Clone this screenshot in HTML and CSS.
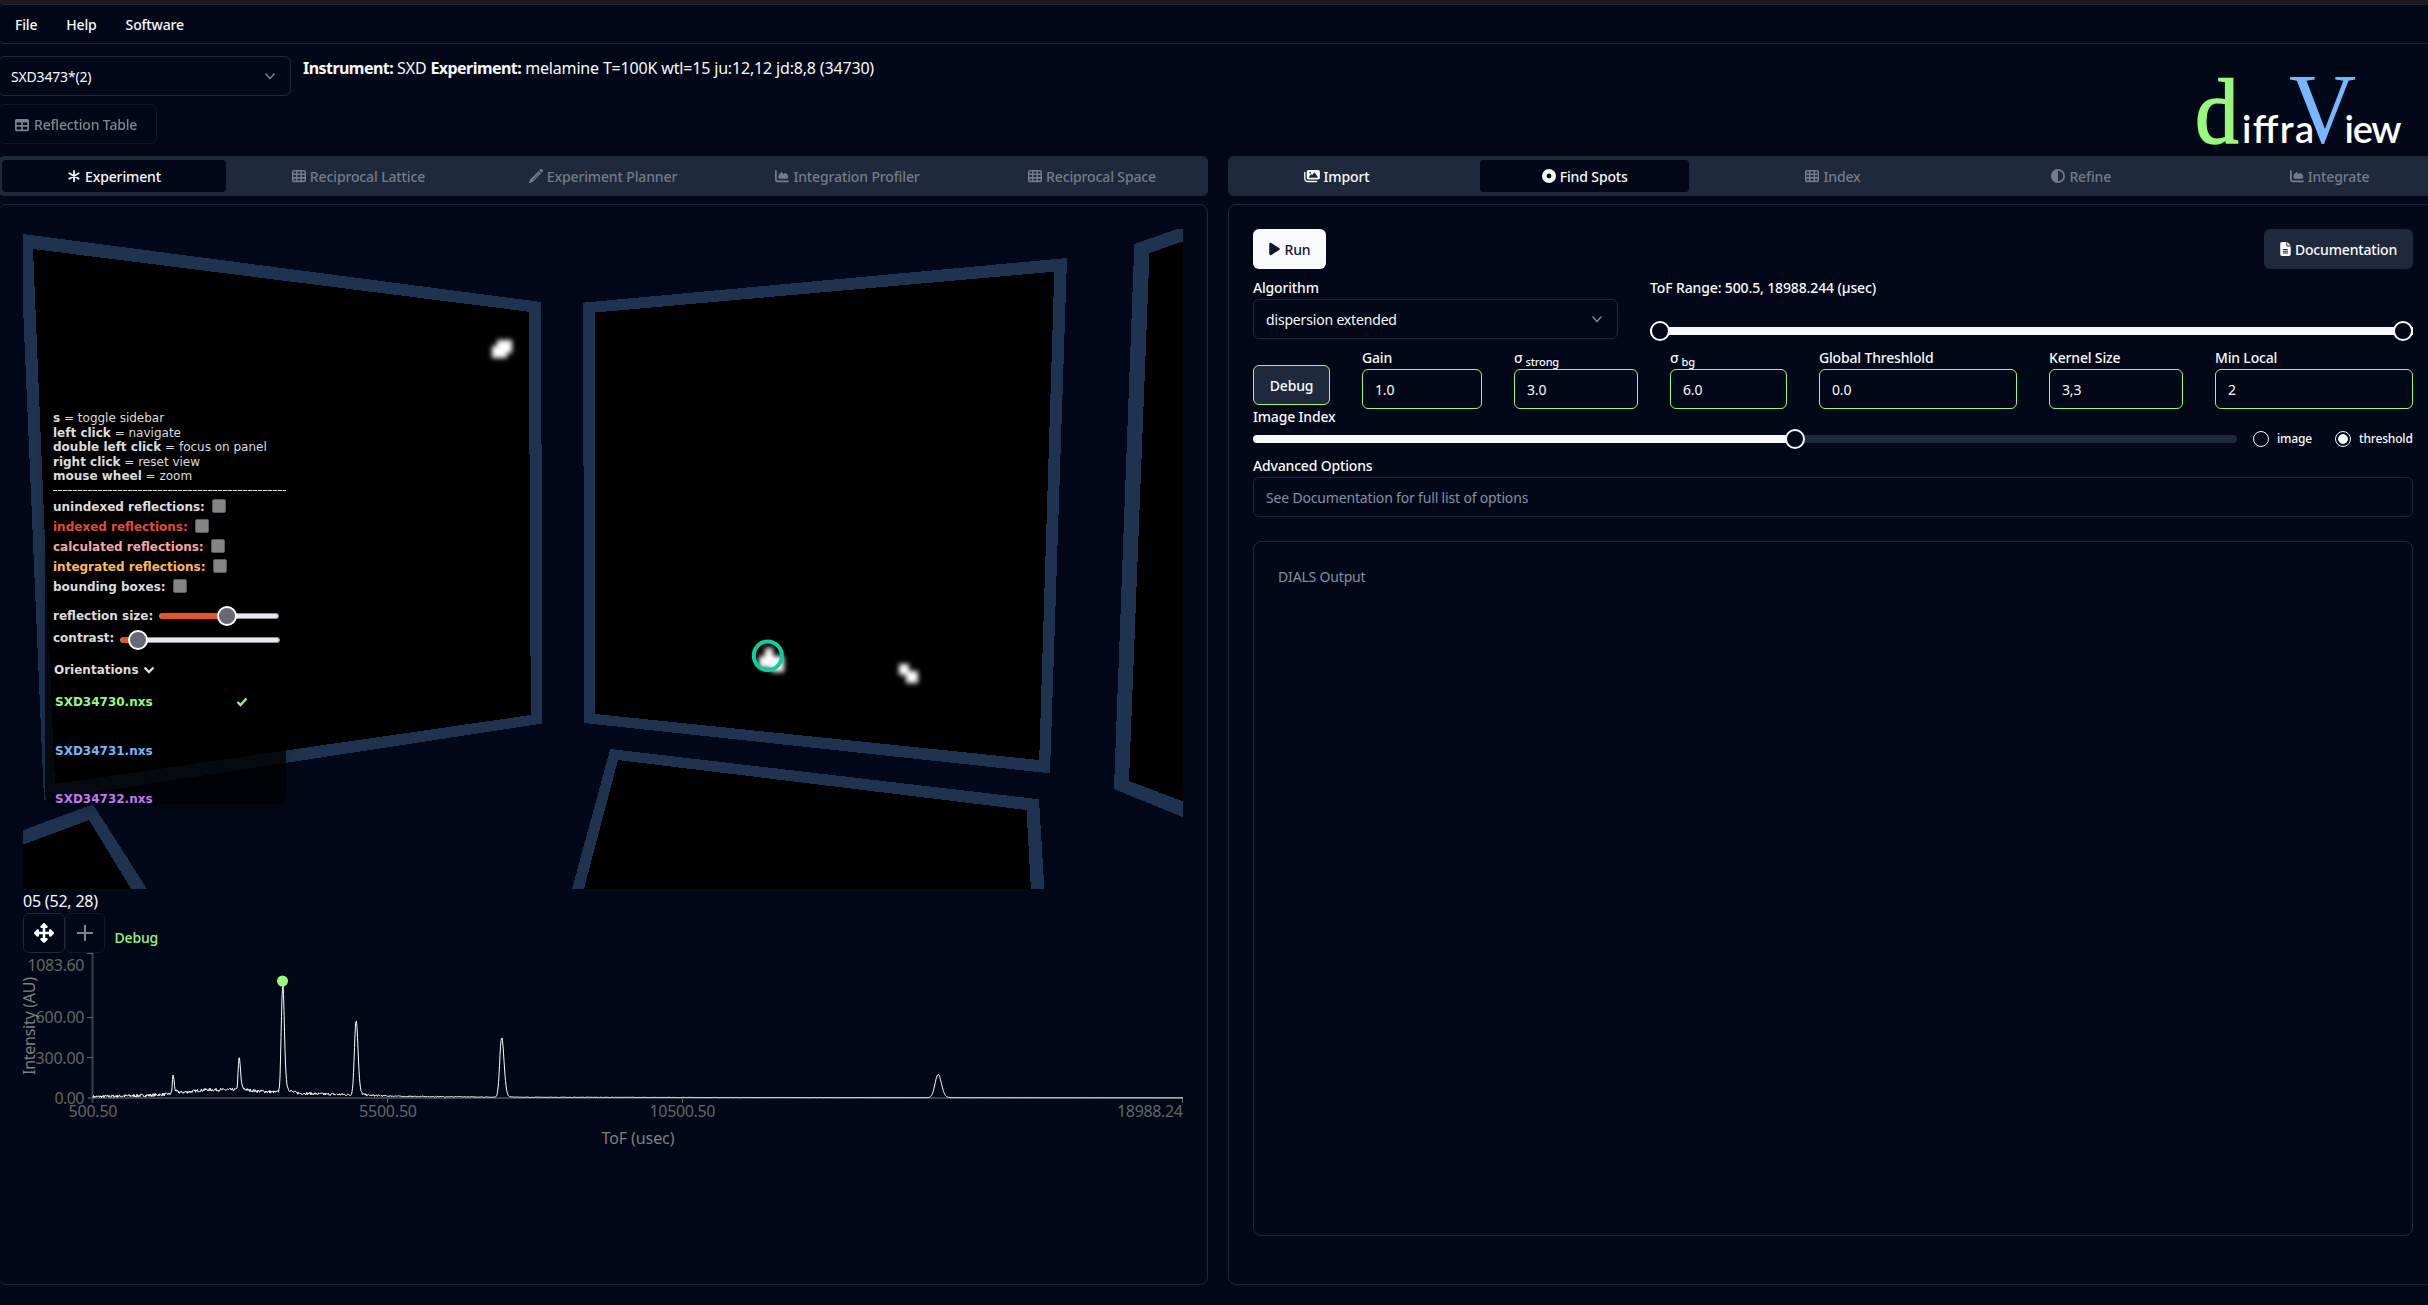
FILE: index.html
```html
<!DOCTYPE html>
<html lang="en">
<head>
<meta charset="utf-8">
<title>diffraView</title>
<link rel="stylesheet" href="styles.css">
</head>
<body>
<svg class="defs" aria-hidden="true">
  <symbol id="i-table" viewBox="0 0 512 512"><path fill-rule="evenodd" d="M64 256V160H224v96H64zm0 64H224v96H64V320zm224 96V320H448v96H288zM448 256H288V160H448v96zM64 32C28.700 32 0 60.700 0 96V416c0 35.300 28.700 64 64 64H448c35.300 0 64-28.700 64-64V96c0-35.300-28.700-64-64-64H64z"/></symbol>
  <symbol id="i-cells" viewBox="0 0 512 512"><path fill-rule="evenodd" d="M64 32H448a64 64 0 0 1 64 64V416a64 64 0 0 1-64 64H64a64 64 0 0 1-64-64V96A64 64 0 0 1 64 32zM56 88v72h88V88zM200 88v72h112V88zM368 88v72h88V88zM56 216v80h88V216zM200 216v80h112V216zM368 216v80h88V216zM56 352v72h88V352zM200 352v72h112V352zM368 352v72h88V352z"/></symbol>
  <symbol id="i-asterisk" viewBox="0 0 512 512"><path fill="none" stroke="currentColor" stroke-width="64" stroke-linecap="round" d="M256 64V448M84 154L428 358M428 154L84 358"/></symbol>
  <symbol id="i-pencil" viewBox="0 0 512 512"><path fill-rule="evenodd" d="M410 18l-36 36 84 84 36-36c24-24 24-46 6-64l-26-26c-20-18-44-14-64 6zM350 78L58 370c-8 8-14 18-17 28L1 481c-3 8-1 18 6 24s16 9 24 6l83-32c11-3 20-9 28-17L434 162zM130 390l200-200 14 14-200 200z"/></symbol>
  <symbol id="i-area" viewBox="0 0 512 512"><path d="M64 64c0-17.700-14.300-32-32-32S0 46.300 0 64V400c0 44.200 35.800 80 80 80H480c17.700 0 32-14.300 32-32s-14.300-32-32-32H80c-8.800 0-16-7.200-16-16V64zm96 288H448c17.700 0 32-14.300 32-32V251.800c0-7.600-2.700-15-7.700-20.800l-65.800-76.800c-12.100-14.200-33.700-15-46.900-1.800l-21 21c-10 10-26.400 9.200-35.400-1.600l-39.200-47c-12.600-15.100-35.700-15.400-48.700-.6L135.900 215c-5.100 5.800-7.900 13.300-7.900 21.100v84c0 17.700 14.300 32 32 32z"/></symbol>
  <symbol id="i-images" viewBox="0 0 576 512"><path fill-rule="evenodd" d="M160 32c-35.300 0-64 28.700-64 64V320c0 35.300 28.700 64 64 64H512c35.300 0 64-28.700 64-64V96c0-35.300-28.700-64-64-64H160zM396 138.700l96 144c4.900 7.400 5.400 16.800 1.200 24.600S480.900 320 472 320H200c-9.200 0-17.600-5.300-21.600-13.600s-2.900-18.200 2.900-25.400l64-80c4.600-5.700 11.400-9 18.700-9s14.200 3.300 18.700 9l17.300 21.600 56-84C360.500 132 368 128 376 128s15.500 4 20 10.700zM192 128a32 32 0 1 1 64 0 32 32 0 1 1-64 0zM48 120c0-13.300-10.700-24-24-24S0 106.700 0 120V344c0 75.100 60.900 136 136 136H456c13.300 0 24-10.700 24-24s-10.700-24-24-24H136c-48.600 0-88-39.400-88-88V120z"/></symbol>
  <symbol id="i-dot" viewBox="0 0 512 512"><circle cx="256" cy="256" r="172" fill="none" stroke="currentColor" stroke-width="168"/></symbol>
  <symbol id="i-half" viewBox="0 0 512 512"><path d="M448 256c0-106-86-192-192-192V448c106 0 192-86 192-192zM0 256a256 256 0 1 1 512 0A256 256 0 1 1 0 256z" fill-rule="evenodd"/></symbol>
  <symbol id="i-play" viewBox="0 0 384 512"><path d="M73 39c-14.800-9.100-33.400-9.400-48.500-.9S0 62.600 0 80V432c0 17.400 9.400 33.400 24.500 41.900s33.700 8.100 48.500-.9L361 297c14.300-8.700 23-24.200 23-41s-8.700-32.200-23-41L73 39z"/></symbol>
  <symbol id="i-file" viewBox="0 0 384 512"><path fill-rule="evenodd" d="M64 0C28.700 0 0 28.700 0 64V448c0 35.300 28.700 64 64 64H320c35.300 0 64-28.700 64-64V160H256c-17.700 0-32-14.300-32-32V0H64zM256 0V128H384L256 0zM112 256H272a16 16 0 0 1 0 32H112a16 16 0 0 1 0-32zM112 320H272a16 16 0 0 1 0 32H112a16 16 0 0 1 0-32zM112 384H272a16 16 0 0 1 0 32H112a16 16 0 0 1 0-32z"/></symbol>
  <symbol id="i-chevron" viewBox="0 0 16 16"><path fill="none" stroke="currentColor" stroke-width="1.200" d="M3.500 5.500L8 10.500L12.500 5.500"/></symbol>
  <symbol id="i-move" viewBox="0 0 512 512"><path d="M256 0c9 0 17 4 23 10l64 64c20 20 6 54-22 54h-33v96h96v-33c0-28 34-42 54-22l64 64c13 13 13 33 0 46l-64 64c-20 20-54 6-54-22v-33h-96v96h33c28 0 42 34 22 54l-64 64c-13 13-33 13-46 0l-64-64c-20-20-6-54 22-54h33v-96h-96v33c0 28-34 42-54 22l-64-64c-13-13-13-33 0-46l64-64c20-20 54-6 54 22v33h96v-96h-33c-28 0-42-34-22-54l64-64c6-6 14-10 23-10z"/></symbol>
</svg>

<div class="app">
  <nav class="menubar"><span>File</span><span>Help</span><span>Software</span></nav>

  <header class="header">
    <div class="experiment">
      <div class="experiment-row">
        <div class="select experiment-select"><span>SXD3473*(2)</span><svg><use href="#i-chevron"/></svg></div>
        <p class="summary"><b>Instrument:</b> SXD <b>Experiment:</b> melamine T=100K wtl=15 ju:12,12 jd:8,8 (34730)</p>
      </div>
      <button class="table-btn"><svg class="ic"><use href="#i-table"/></svg>Reflection Table</button>
    </div>
    <svg class="logo" viewBox="0 0 220 90">
      <text class="logo-d" x="0" y="0" transform="translate(3 82.500) scale(.93 1)">d</text>
      <text class="logo-v" x="0" y="0" transform="translate(97 82) scale(.94 1)">V</text>
      <text class="logo-t" x="50" y="82.500" textLength="72">iffra</text>
      <text class="logo-t" x="152.500" y="82.500" textLength="57">iew</text>
    </svg>
  </header>

  <main class="columns">
    <section class="column">
      <div class="tabs">
        <div class="tab active"><svg class="ic"><use href="#i-asterisk"/></svg><span>Experiment</span></div>
        <div class="tab off"><svg class="ic"><use href="#i-cells"/></svg><span>Reciprocal Lattice</span></div>
        <div class="tab off"><svg class="ic"><use href="#i-pencil"/></svg><span>Experiment Planner</span></div>
        <div class="tab off"><svg class="ic"><use href="#i-area"/></svg><span>Integration Profiler</span></div>
        <div class="tab off"><svg class="ic"><use href="#i-cells"/></svg><span>Reciprocal Space</span></div>
      </div>
      <div class="panel">
        <div class="viewer">
          <svg class="scene" viewBox="23 229 1160 660" shape-rendering="crispEdges">
            <g class="frame">
              <path d="M19.900 233.600L541 302L542.500 723.500L44 800z"/>
              <path d="M583 302.700L1067 258L1050 773.300L584.300 723z"/>
              <path d="M1134.300 244L1190 224.500V820L1114 789z"/>
              <path d="M610.300 749L1039 799.300L1045 900H569z"/>
              <path d="M10 835L93 804.300L154 900H10z"/>
            </g>
            <g class="face">
              <path d="M33 249L528.800 311.700L530.800 715L55 784z"/>
              <path d="M595.200 312.500L1054.300 271.700L1039.200 760L595.200 714z"/>
              <path d="M1149.500 253L1190 239V804L1129 781z"/>
              <path d="M618 760L1026.500 810L1031.500 900H581z"/>
              <path d="M10 849.500L89 820L138 900H10z"/>
            </g>
          </svg>
          <svg class="scene spots" viewBox="23 229 1160 660">
            <g class="blob">
              <path d="M497 340h15v13h-5v5h-15v-12h5z"/>
              <path d="M765 648h8v8h11v16h-13v-4h-12v-12h6z"/>
              <path d="M899 664h10v7h9v12h-12v-8h-7z"/>
            </g>
            <ellipse cx="767.800" cy="655.700" rx="14" ry="14.300"/>
          </svg>

          <aside class="sidebar">
            <p><b>s</b> = toggle sidebar</p>
            <p><b>left click</b> = navigate</p>
            <p><b>double left click</b> = focus on panel</p>
            <p><b>right click</b> = reset view</p>
            <p><b>mouse wheel</b> = zoom</p>
            <div class="rule"></div>
            <label class="check">unindexed reflections:<i></i></label>
            <label class="check indexed">indexed reflections:<i></i></label>
            <label class="check calculated">calculated reflections:<i></i></label>
            <label class="check integrated">integrated reflections:<i></i></label>
            <label class="check">bounding boxes:<i></i></label>
            <label class="range size">reflection size:<span class="bar"><i style="width:67px"></i><b></b></span></label>
            <label class="range contrast">contrast:<span class="bar"><i style="width:17px"></i><b></b></span></label>
            <div class="orient">Orientations<svg viewBox="0 0 12 8"><path d="M1.500 1.500L6 6L10.500 1.500"/></svg></div>
            <div class="run green">SXD34730.nxs<svg viewBox="0 0 12 10"><path d="M1.500 5L4.500 8L10.500 1.500"/></svg></div>
            <div class="run blue">SXD34731.nxs</div>
            <div class="run violet">SXD34732.nxs</div>
          </aside>
        </div>

        <p class="pixel">05 (52, 28)</p>
        <div class="tools">
          <button class="tool"><svg viewBox="0 0 512 512"><use href="#i-move"/></svg></button>
          <button class="tool plus"><svg viewBox="0 0 16 16"><path d="M8 0V16M0 8H16"/></svg></button>
          <span>Debug</span>
        </div>
        <svg class="chart" viewBox="15 953 1170 200">
          <path class="axis" d="M92.500 953V1103M88 1098H1183"/>
          <path class="tick" d="M87 953.500H93M87 1017.500H93M87 1057.500H93M387.500 1099V1103M682.500 1099V1103M1182.500 1097V1103"/>
          <g class="labels">
            <text x="84.500" y="970.500" text-anchor="end" textLength="57">1083.60</text>
            <text x="84.500" y="1023" text-anchor="end" textLength="49">600.00</text>
            <text x="84.500" y="1063.500" text-anchor="end" textLength="49">300.00</text>
            <text x="84.500" y="1104" text-anchor="end" textLength="30">0.00</text>
            <text x="93" y="1117" text-anchor="middle" textLength="49">500.50</text>
            <text x="388" y="1117" text-anchor="middle" textLength="58">5500.50</text>
            <text x="682.500" y="1117" text-anchor="middle" textLength="66">10500.50</text>
            <text x="1183" y="1117" text-anchor="end" textLength="66">18988.24</text>
          </g>
          <g class="titles">
            <text x="638" y="1144" text-anchor="middle" textLength="73">ToF (usec)</text>
            <text transform="translate(34.500 1026) rotate(-90)" text-anchor="middle" textLength="98">Intensity (AU)</text>
          </g>
          <path class="trace" id="trace"/>
          <circle class="marker" cx="282.500" cy="981" r="5.500"/>
        </svg>
      </div>
    </section>

    <section class="column right">
      <div class="tabs">
        <div class="tab"><svg class="ic wide"><use href="#i-images"/></svg><span>Import</span></div>
        <div class="tab active"><svg class="ic"><use href="#i-dot"/></svg><span>Find Spots</span></div>
        <div class="tab off"><svg class="ic"><use href="#i-cells"/></svg><span>Index</span></div>
        <div class="tab off"><svg class="ic"><use href="#i-half"/></svg><span>Refine</span></div>
        <div class="tab off"><svg class="ic"><use href="#i-area"/></svg><span>Integrate</span></div>
      </div>
      <div class="panel form">
        <div class="actions">
          <button class="btn primary"><svg class="ic slim"><use href="#i-play"/></svg><span>Run</span></button>
          <button class="btn secondary"><svg class="ic slim"><use href="#i-file"/></svg><span>Documentation</span></button>
        </div>
        <div class="row algo">
          <div class="field"><label>Algorithm</label>
            <div class="select"><span>dispersion extended</span><svg><use href="#i-chevron"/></svg></div></div>
          <div class="field tof"><label>ToF Range: 500.5, 18988.244 (µsec)</label>
            <div class="slider full"><i></i><b></b><b></b></div></div>
        </div>
        <div class="row params">
          <button class="btn secondary debug"><span>Debug</span></button>
          <div class="field"><label>Gain</label><div class="input">1.0</div></div>
          <div class="field"><label>σ<sub>strong</sub></label><div class="input">3.0</div></div>
          <div class="field"><label>σ<sub>bg</sub></label><div class="input">6.0</div></div>
          <div class="field"><label>Global Threshlold</label><div class="input">0.0</div></div>
          <div class="field"><label>Kernel Size</label><div class="input">3,3</div></div>
          <div class="field"><label>Min Local</label><div class="input">2</div></div>
        </div>
        <label class="index-label">Image Index</label>
        <div class="index">
          <div class="slider"><i style="width:542px"></i><b></b></div>
          <span class="radio"><i></i>image</span>
          <span class="radio on"><i></i>threshold</span>
        </div>
        <label class="adv-label">Advanced Options</label>
        <div class="textbox">See Documentation for full list of options</div>
        <div class="output">DIALS Output</div>
      </div>
    </section>
  </main>
</div>
<script src="chart.js"></script>
</body>
</html>
```
FILE: chart.js
```js
// Intensity trace: noisy background plus asymmetric Bragg peaks.
(function () {
  var base = 1097.8;
  // x centre, height, left width, right width, tail height
  var peaks = [
    [173, 18, 0.7, 1, 5], [239, 31, 0.9, 1.3, 7], [282.5, 104, 1.3, 1.7, 20],
    [356, 74, 1.6, 1.9, 8], [501.5, 59, 1.8, 2.4, 5], [938, 23, 3, 3.4, 1]
  ];
  var background = [[93, 1], [150, 2.5], [173, 4], [205, 8], [235, 8], [270, 6], [300, 4.500], [350, 3], [400, 1.500], [500, 0.600], [700, 0.300], [1183, 0]];
  var seed = 7;
  function rand() { seed = (seed * 16807) % 2147483647; return seed / 2147483647 - 0.5; }
  function level(x) {
    for (var i = 1; i < background.length; i++) {
      if (x <= background[i][0]) {
        var a = background[i - 1], b = background[i];
        return a[1] + (b[1] - a[1]) * (x - a[0]) / (b[0] - a[0]);
      }
    }
    return 0;
  }
  var d = "";
  for (var x = 93; x <= 1183; x += 0.5) {
    var bg = level(x), y = bg;
    peaks.forEach(function (p) {
      var t = x - p[0], w = t < 0 ? p[2] : p[3];
      y += p[1] * Math.exp(-t * t / (2 * w * w));
      if (t > 0) y += p[4] * Math.exp(-t / 3.5) * (1 - Math.exp(-t));
    });
    y += rand() * (x < 300 ? 3 : Math.min(2.5, bg * 0.8));
    d += (d ? "L" : "M") + x + " " + (base - Math.max(0, y)).toFixed(2);
  }
  document.getElementById("trace").setAttribute("d", d);
})();
```
FILE: styles.css
```css
* { box-sizing: border-box; }
body, p { margin: 0; }
body {
  background: #020817;
  color: #f8fafc;
  font: 400 14px/20px "Noto Sans", sans-serif;
  letter-spacing: -.17px;
  width: 2428px;
  height: 1305px;
  overflow: hidden;
}
button { font: inherit; letter-spacing: inherit; color: inherit; background: none; }
.defs { position: absolute; width: 0; height: 0; }
svg { fill: currentColor; flex: none; }
.ic { width: 14px; height: 14px; margin-right: 4px; }
.ic.wide { width: 16px; }
.ic.slim { width: 11px; }

.app { width: 2440px; height: 1305px; margin-left: -2px; border-top: 4px solid #1a1a1a; }
.menubar {
  display: flex; align-items: center; gap: 29px;
  height: 40px; padding-left: 16px; padding-top: 1px;
  border: 1px solid #1e293b; border-radius: 6px; font-weight: 500;
}
.header { display: flex; justify-content: space-between; height: 112px; padding: 12px 26px 0 0; }
.experiment-row { display: flex; gap: 12px; margin-bottom: 8px; }
.select {
  display: flex; align-items: center; justify-content: space-between;
  height: 40px; padding: 0 12px; border: 1px solid #1e293b; border-radius: 6px;
}
.select span, .tab span, .btn span { padding-top: 2px; }
.select svg { width: 16px; height: 16px; opacity: .55; }
.experiment-select { width: 293px; }
.summary { font-size: 16px; line-height: 25px; letter-spacing: -.17px; }
.summary b { letter-spacing: -.55px; font-weight: 700; }
.table-btn {
  display: flex; align-items: center; height: 40px; width: 159px; padding: 1px 0 0 16px;
  border: 1px solid #1e293b; border-radius: 6px; font-weight: 500; opacity: .5;
}
.table-btn .ic { margin-right: 5px; }
.logo { width: 220px; height: 90px; margin-top: 4px; font-family: Lato, sans-serif; }
.logo-d { fill: #98f97c; stroke: #98f97c; stroke-width: 1.500px; font: 94px "Liberation Serif", serif; letter-spacing: 0; }
.logo-v { fill: #75b8ff; font: 99px "Liberation Serif", serif; letter-spacing: 0; }
.logo-t { fill: #fff; font: 600 38px Lato, sans-serif; letter-spacing: 0; }

.columns { display: grid; grid-template-columns: 1210px 1210px; gap: 20px; }
.tabs {
  display: flex; justify-content: space-between; height: 40px; padding: 4px;
  background: #1e293b; border-radius: 6px; font-weight: 500; letter-spacing: -.13px;
}
.tab { display: flex; align-items: center; justify-content: center; width: 224px; border-radius: 4px; }
.right .tab { width: 209px; }
.tab.active { background: #020817; }
.tab.off { color: #747c89; }
.panel { height: 1081px; margin-top: 8px; padding: 24px; border: 1px solid #1e293b; border-radius: 8px; }

.viewer { position: relative; width: 1160px; height: 660px; overflow: hidden; }
.scene { display: block; width: 1160px; height: 660px; }
.frame { fill: #1d3350; }
.face { fill: #000; }
.spots { position: absolute; inset: 0; }
.spots ellipse { fill: none; stroke: #06d29c; stroke-width: 4px; }
.blob { fill: #fff; filter: blur(2.400px); }

.sidebar {
  position: absolute; left: 22px; top: 171px; width: 241px; height: 404px;
  padding: 11px 0 0 8px; overflow: hidden; border-radius: 8px;
  background: rgba(0, 0, 0, .8); box-shadow: 0 4px 12px rgba(0, 0, 0, .25);
  color: #dcdcdc; font: 12px/14.500px "DejaVu Sans", sans-serif; letter-spacing: 0; white-space: nowrap;
}
.rule { height: 1px; margin: 6.500px 0 6px; background: repeating-linear-gradient(90deg, #dcdcdc 0 4px, #555 4px 5px); }
.check, .range, .orient, .run { display: flex; align-items: center; font-weight: 700; }
.check { height: 20px; }
.check i { width: 14px; height: 14px; margin: -2px 0 0 7.500px; background: #858585; border: 1px solid #5a5a66; border-radius: 2px; }
.indexed { color: #e04a38; }
.calculated { color: #f5a5a5; }
.integrated { color: #fdba55; }
.range { height: 20px; margin-top: 9px; }
.range.contrast { margin-top: 2px; }
.bar { position: relative; display: flex; align-items: center; height: 6px; margin-left: 6px; width: 120px; background: #e9e7ee; border-radius: 3px; border: 1px solid #8f8f9d; }
.contrast .bar { width: 160px; margin-top: 4px; }
.bar i { height: 6px; flex: none; background: #e95420; border-radius: 3px 0 0 3px; }
.bar b { width: 20px; height: 20px; flex: none; margin-left: -10px; border: 2px solid #fff; border-radius: 50%; background: #686876; }
.orient { margin-top: 12px; height: 20px; padding-left: 1px; }
.orient svg { width: 12px; height: 8px; margin-left: 4px; }
.orient path, .run path { fill: none; stroke: currentColor; stroke-width: 2.400px; }
.run { height: 48.700px; padding-left: 2px; margin-right: 28px; }
.run.green { margin-top: -2px; }
.run svg { width: 12px; height: 10px; margin-left: 83px; }
.green { color: #98f97c; }
.blue { color: #75b8ff; }
.violet { color: #c278fb; }

.pixel { font-size: 16px; line-height: 24px; letter-spacing: -.2px; }
.tools { display: flex; height: 40px; color: #98f97c; font-weight: 500; }
.tool { display: flex; align-items: center; justify-content: center; width: 42px; padding: 0; color: #fff; border: 1px solid #1e293b; border-radius: 6px; }
.tool svg { width: 20px; height: 20px; }
.tool.plus { width: 40px; opacity: .5; }
.tool.plus svg { width: 16px; height: 16px; fill: none; stroke: #fff; stroke-width: 2px; }
.tools span { margin: 15px 0 0 9.500px; }
.chart { display: block; width: 1170px; height: 200px; margin-left: -8px; font-size: 16px; letter-spacing: 0; }
.axis { fill: none; stroke: #3d3f46; stroke-width: 2px; }
.tick { fill: none; stroke: #666; stroke-width: 1px; }
.labels { fill: #666; }
.titles { fill: #808080; }
.trace { fill: none; stroke: #fff; stroke-width: 1px; }
.marker { fill: #98f97c; }

.actions { display: flex; justify-content: space-between; }
.btn { display: flex; align-items: center; justify-content: center; height: 40px; padding: 0; border: 0; border-radius: 6px; font-weight: 500; }
.primary { width: 73px; background: #f8fafc; color: #0f172a; }
.primary .ic { margin-right: 5px; }
.secondary { width: 149px; background: #1e293b; }
.form label { display: block; font-weight: 500; }
.row { display: grid; }
.algo { grid-template-columns: 365px 763px; gap: 32px; margin-top: 9px; }
.field .select, .field .input { margin-top: 1px; }
.slider { position: relative; display: flex; align-items: center; height: 8px; background: #1e293b; border-radius: 4px; }
.slider i { flex: none; height: 8px; background: #f8fafc; border-radius: 4px 0 0 4px; }
.slider b { flex: none; width: 20px; height: 20px; margin-left: -10px; border: 2px solid #f8fafc; border-radius: 50%; background: #020817; }
.slider.full { margin-top: 29px; }
.slider.full i { width: 763px; margin-right: -763px; }
.slider.full b { margin: 0; z-index: 1; }
.slider.full b:last-child { margin-left: auto; }
.tof label { letter-spacing: -.13px; }
.params { grid-template-columns: 77px 120px 124px 117px 198px 134px 198px; gap: 32px; margin-top: 9px; }
.params .btn { width: 77px; margin-top: 17px; border: 1px solid #98f97c; }
.params label { height: 20px; white-space: nowrap; }
.input { height: 40px; padding: 10px 12px 8px; border: 1px solid #98f97c; border-radius: 6px; }
sub { font-size: 11px; line-height: 0; margin-left: 3px; vertical-align: -2.500px; }
.form .index-label { margin-top: -2px; }
.index { display: grid; grid-template-columns: 984px 58px 78px; align-items: center; gap: 16px; height: 24px; }
.radio { display: flex; align-items: center; gap: 8px; font-size: 12px; line-height: 16px; font-weight: 500; }
.radio.on { margin-left: 8px; }
.radio i { flex: none; width: 16px; height: 16px; border: 1px solid #f8fafc; border-radius: 50%; }
.radio.on i { background: radial-gradient(circle, #f8fafc 4.500px, transparent 5.200px); }
.form .adv-label { margin-top: 5px; }
.textbox { height: 40px; margin-top: 1px; padding: 10px 12px 8px; border: 1px solid #1e293b; border-radius: 6px; color: #8391a5; }
.output { height: 695px; margin-top: 24px; padding: 25px 24px; border: 1px solid #1e293b; border-radius: 8px; color: #8391a5; }
```
